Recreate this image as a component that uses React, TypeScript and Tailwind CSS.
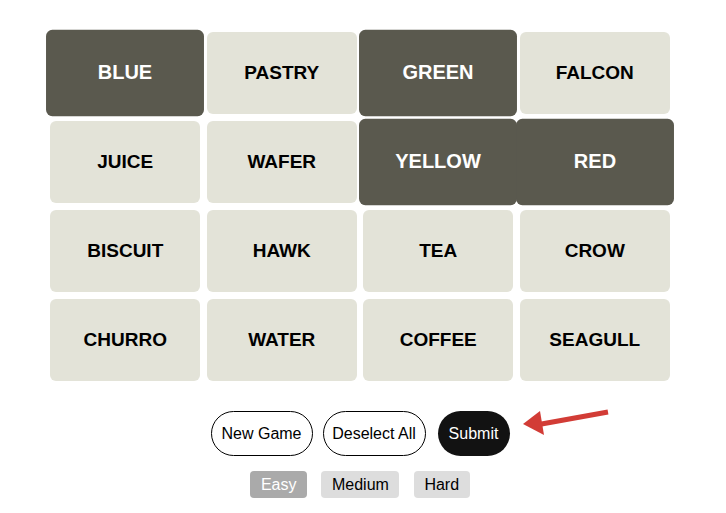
import React from 'react';

const words = [
  ['BLUE', true], ['PASTRY', false], ['GREEN', true], ['FALCON', false],
  ['JUICE', false], ['WAFER', false], ['YELLOW', true], ['RED', true],
  ['BISCUIT', false], ['HAWK', false], ['TEA', false], ['CROW', false],
  ['CHURRO', false], ['WATER', false], ['COFFEE', false], ['SEAGULL', false],
] as const;

export default function App() {
  return (
    <div className="min-h-[513px] w-[726px] bg-white font-['Liberation_Sans',Arial,sans-serif]">
      <div className="w-[720px] pt-8 flex flex-col items-center">
        {/* Tiles */}
        <div className="grid grid-cols-[repeat(4,150px)] auto-rows-[82px] gap-x-[6.5px] gap-y-[7px]">
          {words.map(([w, sel]) => (
            <div
              key={w}
              className={
                sel
                  ? 'flex items-center justify-center rounded-md bg-[#5a594e] text-white text-[19px] font-bold scale-[1.053] scale-y-[1.06]'
                  : 'flex items-center justify-center rounded-md bg-[#e3e3d8] text-black text-[19px] font-bold'
              }
            >
              {w}
            </div>
          ))}
        </div>

        {/* Controls */}
        <div className="relative mt-[30px] flex items-center">
          <button className="h-[45px] w-[102px] rounded-full border border-black text-base text-black bg-white">
            New Game
          </button>
          <button className="ml-[10px] h-[45px] w-[103px] rounded-full border border-black text-base text-black bg-white">
            Deselect All
          </button>
          <button className="ml-[12px] h-[45px] w-[72px] rounded-full bg-[#121212] text-base text-white">
            Submit
          </button>
          <svg className="absolute left-[309px] top-[-2px]" width="90" height="30" viewBox="0 0 90 30">
            <line x1="88" y1="3" x2="16" y2="16" stroke="#d23c36" strokeWidth="5" />
            <polygon points="3,15 20,2 24,26" fill="#d23c36" />
          </svg>
        </div>

        {/* Difficulty */}
        <div className="mt-[15px] flex items-center gap-[14.5px]">
          <span className="h-[27px] px-[10.5px] flex items-center rounded bg-[#aaaaaa] text-base text-white">Easy</span>
          <span className="h-[27px] px-[10.5px] flex items-center rounded bg-[#dddddd] text-base text-black">Medium</span>
          <span className="h-[27px] px-[10.5px] flex items-center rounded bg-[#dddddd] text-base text-black">Hard</span>
        </div>
      </div>
    </div>
  );
}
